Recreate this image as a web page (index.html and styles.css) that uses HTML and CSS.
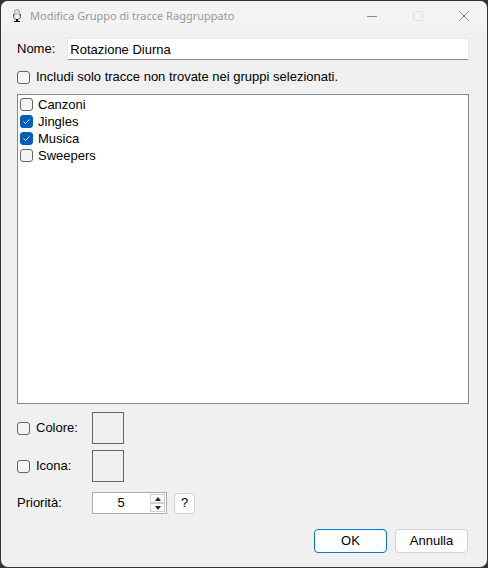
FILE: index.html
```html
<!DOCTYPE html>
<html lang="it">
<head>
<meta charset="utf-8">
<title>Modifica Gruppo di tracce Raggruppato</title>
<link rel="stylesheet" href="styles.css">
</head>
<body>
<main class="window">
  <header class="titlebar">
    <svg class="app-icon" viewBox="0 0 10 16" aria-hidden="true">
      <rect x="2" y="1" width="6" height="9" rx="3" fill="#a8a8a8"/>
      <rect x="3" y="2" width="4" height="4" rx="2" fill="#dedede"/>
      <path d="M3 6.5h4v2a2 2 0 0 1-4 0z" fill="#f4f4f4"/>
      <path d="M1.5 6v2.5c0 4 7 4 7 0V6" fill="none" stroke="#555"/>
      <path d="M4 11h2v2h2v1H2v-1h2z" fill="#111"/>
    </svg>
    <h1 class="title">Modifica Gruppo di tracce Raggruppato</h1>
    <div class="controls">
      <button class="control" type="button" aria-label="Riduci a icona">
        <svg viewBox="0 0 12 12"><path d="M1 6.5h10" stroke="#8c8c8c"/></svg>
      </button>
      <button class="control" type="button" aria-label="Ingrandisci" disabled>
        <svg viewBox="0 0 12 12"><rect x="1.5" y="1.5" width="9" height="9" rx="1" fill="none" stroke="#dcdcdc"/></svg>
      </button>
      <button class="control" type="button" aria-label="Chiudi">
        <svg viewBox="0 0 12 12"><path d="M1 1l10 10M11 1L1 11" stroke="#858585"/></svg>
      </button>
    </div>
  </header>
  <form class="form">
    <div class="name-row">
      <label for="name">Nome:</label>
      <input class="name" id="name" type="text" value="Rotazione Diurna">
    </div>
    <label class="check only-row"><input type="checkbox"><span>Includi solo tracce non trovate nei gruppi selezionati.</span></label>
    <div class="list">
      <label class="check"><input type="checkbox"><span>Canzoni</span></label>
      <label class="check"><input type="checkbox" checked><span>Jingles</span></label>
      <label class="check"><input type="checkbox" checked><span>Musica</span></label>
      <label class="check"><input type="checkbox"><span>Sweepers</span></label>
    </div>
    <div class="options">
      <label class="check"><input type="checkbox"><span>Colore:</span></label>
      <button class="swatch" type="button" aria-label="Scegli colore"></button>
      <label class="check"><input type="checkbox"><span>Icona:</span></label>
      <button class="swatch" type="button" aria-label="Scegli icona"></button>
    </div>
    <div class="priority-row">
      <label for="priority">Priorità:</label>
      <div class="spinner">
        <input class="number" id="priority" type="text" inputmode="numeric" value="5">
        <div class="arrows">
          <button class="arrow" type="button" aria-label="Aumenta"><svg viewBox="0 0 6 4"><path d="M0 4l3-4 3 4z" fill="#222"/></svg></button>
          <button class="arrow" type="button" aria-label="Diminuisci"><svg viewBox="0 0 6 4"><path d="M0 0l3 4 3-4z" fill="#222"/></svg></button>
        </div>
      </div>
      <button class="button help" type="button">?</button>
    </div>
    <footer class="actions">
      <button class="button primary" type="submit">OK</button>
      <button class="button" type="button">Annulla</button>
    </footer>
  </form>
</main>
</body>
</html>
```
FILE: styles.css
```css
* {
  box-sizing: border-box;
}

body {
  display: flex;
  min-height: 100vh;
  margin: 0;
  padding: 1px;
  background: #333234;
  color: #000;
  font: 13px/16px "Liberation Sans", Arial, sans-serif;
}

button,
input {
  margin: 0;
  padding: 0;
  color: inherit;
  font: inherit;
}

.window {
  display: flex;
  flex: 1;
  flex-direction: column;
  overflow: hidden;
  border-radius: 7px;
  background: #f0f0f0;
}

.titlebar {
  display: flex;
  align-items: center;
  height: 30px;
  padding-left: 11px;
  background: #f3f3f3;
}

.app-icon {
  width: 10px;
  height: 16px;
}

.title {
  flex: 1;
  margin: 0 0 0 8px;
  color: #999;
  font: 11px/16px "Noto Sans", "Segoe UI", sans-serif;
}

.controls {
  display: flex;
}

.control {
  display: grid;
  place-items: center;
  width: 46px;
  height: 28px;
  border: 0;
  background: none;
}

.control svg {
  width: 12px;
  height: 12px;
}

.form {
  display: flex;
  flex: 1;
  flex-direction: column;
  padding: 7px 18px 14px 16px;
}

.name-row {
  display: flex;
  align-items: center;
  gap: 12px;
}

.name {
  flex: 1;
  min-width: 0;
  height: 22px;
  padding: 0 2px;
  border: 1px solid #e8e8e8;
  border-bottom-color: #868686;
  border-radius: 2px;
  background: #fff;
}

.check {
  display: flex;
  align-items: center;
  gap: 6px;
}

.check input {
  flex: none;
  width: 13px;
  height: 13px;
  border: 1px solid #666;
  border-radius: 3px;
  background: #f4f4f4;
  appearance: none;
}

.check input:checked {
  border-color: #005fb8;
  background: #005fb8 url("data:image/svg+xml,%3Csvg xmlns='http://www.w3.org/2000/svg' viewBox='0 0 11 11'%3E%3Cpath d='M2.5 5.5l2 2 4-4' fill='none' stroke='white' stroke-width='.9'/%3E%3C/svg%3E") center / 11px 11px;
}

.only-row {
  margin: 9px 0;
}

.list {
  flex: 1;
  padding: 1px 2px;
  border: 1px solid #828790;
  background: #fff;
}

.list .check {
  height: 17px;
  gap: 5px;
}

.options {
  display: grid;
  grid-template-columns: 75px 32px;
  align-items: center;
  row-gap: 6px;
  margin-top: 8px;
}

.swatch {
  height: 32px;
  border: 1px solid #646464;
  background: #f0f0f0;
}

.priority-row {
  display: grid;
  grid-template-columns: 75px 75px 28px;
  align-items: center;
  margin-top: 10px;
}

.spinner {
  display: flex;
  height: 22px;
  border: 1px solid #abadb3;
  background: #fff;
}

.number {
  flex: 1;
  min-width: 0;
  border: 0;
  background: none;
  text-align: center;
}

.arrows {
  display: flex;
  flex-direction: column;
  width: 15px;
  margin: 1px;
}

.arrow {
  display: grid;
  flex: 1;
  place-items: center;
  border: 1px solid #d0d0d0;
  background: #fdfdfd;
}

.arrow svg {
  width: 6px;
  height: 4px;
}

.button {
  width: 73px;
  height: 24px;
  border: 1px solid #d0d0d0;
  border-radius: 4px;
  background: #fdfdfd;
}

.help {
  width: 21px;
  height: 21px;
  margin-left: 7px;
}

.primary {
  border-color: #0078d4;
}

.actions {
  display: flex;
  justify-content: flex-end;
  gap: 8px;
  margin-top: 15px;
  padding-right: 1px;
}
```
